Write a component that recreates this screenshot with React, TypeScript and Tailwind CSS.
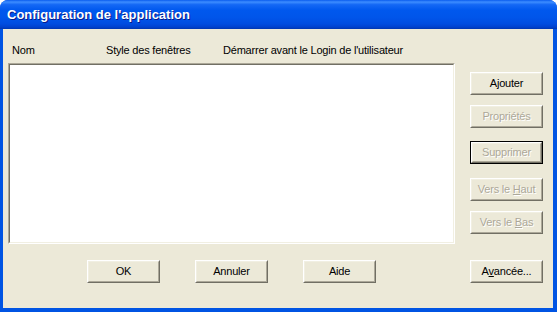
import React from "react";

const FONT = "font-['Liberation_Sans',Arial,sans-serif]";

function Btn({
  children,
  disabled = false,
  focused = false,
  className = "",
}: {
  children: React.ReactNode;
  disabled?: boolean;
  focused?: boolean;
  className?: string;
}) {
  const inner = (
    <div className="h-full w-full border border-t-white border-l-white border-b-[#716F64] border-r-[#716F64]">
      <div
        className={
          "h-full w-full border border-t-[#F1EFE2] border-l-[#F1EFE2] border-b-[#ACA899] border-r-[#ACA899] flex items-center justify-center text-[11px] leading-[13px] tracking-[-0.2px] " +
          (disabled
            ? "text-[#ACA899] [text-shadow:1px_1px_0_#ffffff]"
            : "text-black")
        }
      >
        {children}
      </div>
    </div>
  );
  return (
    <div
      className={
        "w-[73px] h-[23px] bg-[#ECE9D8] " +
        (focused ? "border border-black " : "") +
        className
      }
    >
      {inner}
    </div>
  );
}

export default function App() {
  return (
    <div
      className={
        "flex flex-col w-[557px] h-[312px] rounded-t-[8px] overflow-hidden bg-[#0054E3] " +
        FONT
      }
    >
      <div className="h-[29px] shrink-0 flex items-center pl-[7px] pt-[1px] bg-[linear-gradient(to_bottom,#0A5CEE_0%,#3D8DFF_7%,#1468F5_16%,#0058EE_35%,#0055EA_60%,#004DE0_82%,#0042CF_93%,#0036B0_100%)]">
        <span className="text-white font-bold text-[13px] leading-[16px] [text-shadow:1px_1px_0_#0A1A8A]">
          Configuration de l'application
        </span>
      </div>
      <div className="flex-1 ml-[3px] mr-[4px] mb-[4px] bg-[#ECE9D8] flex flex-col pl-[5px] pt-[15px]">
        <div className="flex">
          <div className="w-[447px] flex flex-col">
            <div className="flex h-[13px] text-[11px] leading-[13px] tracking-[-0.2px] text-black">
              <span className="w-[98px] pl-[4px]">Nom</span>
              <span className="w-[117px]">Style des fenêtres</span>
              <span>Démarrer avant le Login de l'utilisateur</span>
            </div>
            <div className="mt-[6px] h-[181px] border border-t-[#ACA899] border-l-[#ACA899] border-b-white border-r-white">
              <div className="h-full w-full bg-white border border-t-[#716F64] border-l-[#716F64] border-b-[#F1EFE2] border-r-[#F1EFE2]" />
            </div>
          </div>
          <div className="ml-[15px] flex flex-col">
            <Btn className="mt-[28px]">Ajouter</Btn>
            <Btn className="mt-[10px]" disabled>
              Propriétés
            </Btn>
            <Btn className="mt-[13px]" disabled focused>
              Supprimer
            </Btn>
            <Btn className="mt-[14px]" disabled>
              <span>
                Vers le <span className="underline">H</span>aut
              </span>
            </Btn>
            <Btn className="mt-[10px]" disabled>
              <span>
                Vers le <span className="underline">B</span>as
              </span>
            </Btn>
          </div>
        </div>
        <div className="flex mt-[16px]">
          <Btn className="ml-[79px]">OK</Btn>
          <Btn className="ml-[35px]">Annuler</Btn>
          <Btn className="ml-[35px]">Aide</Btn>
          <Btn className="ml-[94px]">
            <span>
              A<span className="underline">v</span>ancée...
            </span>
          </Btn>
        </div>
      </div>
    </div>
  );
}
